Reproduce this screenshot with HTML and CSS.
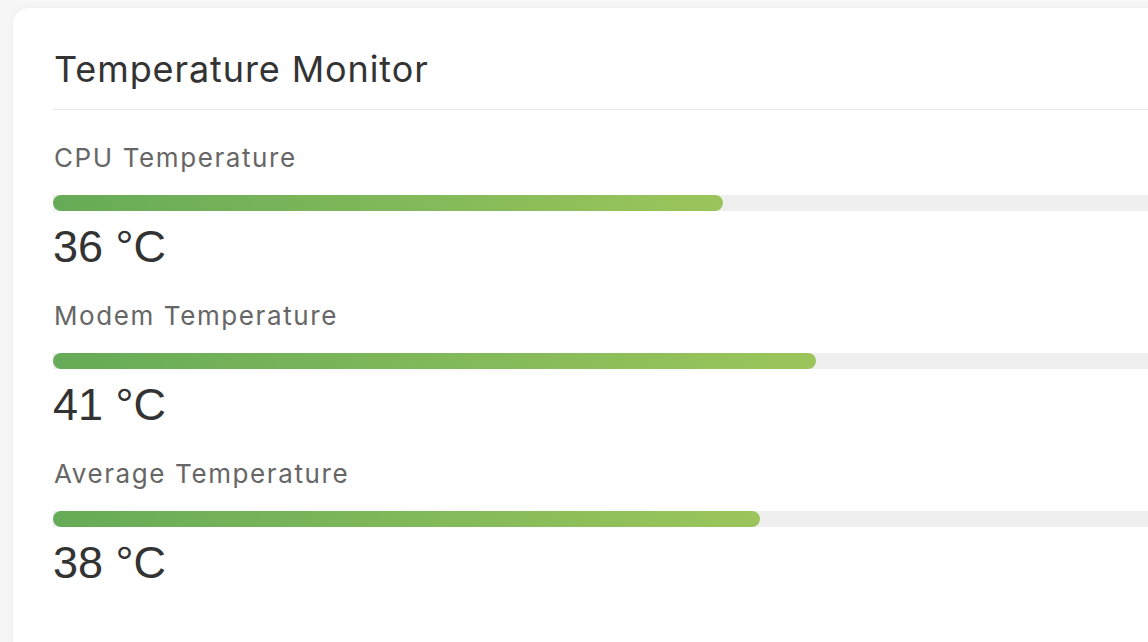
FILE: index.html
```html
<!DOCTYPE html>
<html lang="en">
<head>
    <meta charset="UTF-8">
    <meta name="viewport" content="width=device-width, initial-scale=1.0">
    <title>Temperature Monitor</title>
    <link rel="stylesheet" href="styles.css">
</head>
<body>
    <div class="page">
        <div class="card">
            <div class="card-header">
                <h2 class="card-title">Temperature Monitor</h2>
            </div>
            <div class="temp-list">
                <div class="temp-item">
                    <div class="temp-label">CPU Temperature</div>
                    <div class="temp-track"><div class="temp-fill" style="width: 36%"></div></div>
                    <div class="temp-value">36 °C</div>
                </div>
                <div class="temp-item">
                    <div class="temp-label">Modem Temperature</div>
                    <div class="temp-track"><div class="temp-fill" style="width: 41%"></div></div>
                    <div class="temp-value">41 °C</div>
                </div>
                <div class="temp-item">
                    <div class="temp-label">Average Temperature</div>
                    <div class="temp-track"><div class="temp-fill" style="width: 38%"></div></div>
                    <div class="temp-value">38 °C</div>
                </div>
            </div>
        </div>
    </div>
</body>
</html>
```

FILE: styles.css
```css
* {
    margin: 0;
    padding: 0;
    box-sizing: border-box;
}

body {
    font-family: "Inter", "Liberation Sans", sans-serif;
    background-color: #f7f7f7;
    overflow: hidden;
}

.page {
    padding: 8px 0 0 13px;
}

/* Tarjeta */
.card {
    width: 1900px;
    min-height: 700px;
    background-color: #fff;
    border-radius: 16px;
    box-shadow: 0 0 10px rgba(0, 0, 0, 0.05);
    padding: 0 0 0 40px;
}

.card-header {
    padding: 39px 0 18px 1px;
    border-bottom: 1px solid #e8e8e8;
}

.card-title {
    font-size: 36px;
    line-height: 44px;
    font-weight: 400;
    letter-spacing: 0.9px;
    color: #333;
}

/* Lista de temperaturas */
.temp-list {
    padding-top: 33px;
}

.temp-item {
    margin-bottom: 29px;
}

.temp-label {
    font-size: 26px;
    line-height: 30px;
    letter-spacing: 1.6px;
    color: #666;
    padding-left: 1px;
}

.temp-track {
    margin-top: 22px;
    height: 16px;
    background-color: #efefef;
}

.temp-fill {
    height: 100%;
    border-radius: 8px;
    background: linear-gradient(to right, #66ab58, #9bc55b);
}

.temp-value {
    margin-top: 11px;
    font-family: "Liberation Sans", Arial, sans-serif;
    font-size: 45px;
    line-height: 50px;
    color: #333;
}
```
